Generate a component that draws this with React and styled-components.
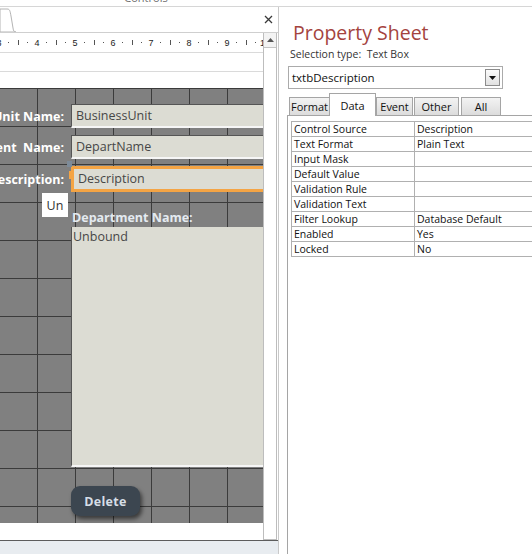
import React from 'react';
import styled, { createGlobalStyle } from 'styled-components';

const GlobalStyle = createGlobalStyle`
  html, body {
    margin: 0;
    padding: 0;
    background: #fff;
  }
  body {
    font-family: "Open Sans", "Noto Sans", sans-serif;
    overflow: hidden;
  }
`;

const Page = styled.div`
  width: 532px;
  height: 554px;
  display: flex;
  flex-direction: column;
  overflow: hidden;
  background: #fff;
`;

const TitleStrip = styled.div`
  height: 6px;
  flex-shrink: 0;
  border-bottom: 1px solid #d6d6d6;
  overflow: hidden;
`;

const TitleText = styled.div`
  width: 292px;
  text-align: center;
  font-size: 11px;
  line-height: 12px;
  margin-top: -8px;
  color: #6e6e6e;
`;

const Main = styled.div`
  flex: 1;
  display: flex;
  min-height: 0;
`;

/* ---------- left: form design window ---------- */

const DocWindow = styled.div`
  width: 278px;
  flex-shrink: 0;
  border-right: 1px solid #c9c9c9;
  display: flex;
  flex-direction: column;
`;

const DocTabBar = styled.div`
  height: 25px;
  flex-shrink: 0;
  border-bottom: 1px solid #cfcfcf;
  display: flex;
  justify-content: space-between;
  align-items: flex-end;
`;

const CloseButton = styled.div`
  width: 20px;
  height: 25px;
  display: flex;
  align-items: center;
  justify-content: center;
`;

const DocBody = styled.div`
  flex: 1;
  display: flex;
  min-height: 0;
`;

const Canvas = styled.div`
  width: 263px;
  flex-shrink: 0;
  display: flex;
  flex-direction: column;
  overflow: hidden;
`;

const Ruler = styled.div`
  height: 19px;
  flex-shrink: 0;
  margin-left: -5.75px;
  border-bottom: 1px solid #dadada;
  display: flex;
  font-family: "Liberation Sans", Arial, sans-serif;
  font-size: 9px;
  color: #222;
`;

const RulerCell = styled.div`
  width: 9.5px;
  flex-shrink: 0;
  display: flex;
  justify-content: center;
  align-items: center;
`;

const RulerDot = styled.span`
  width: 1.5px;
  height: 1.5px;
  background: #555;
`;

const RulerTick = styled.span`
  width: 1px;
  height: 5px;
  background: #555;
`;

const HeaderBand = styled.div`
  height: ${(p) => p.$h}px;
  flex-shrink: 0;
  border-bottom: ${(p) => (p.$line ? '1px solid #dadada' : 'none')};
`;

const DesignGrid = styled.div`
  height: 435px;
  flex-shrink: 0;
  position: relative;
  padding-top: 16px;
  box-sizing: border-box;
  background-color: #808080;
  background-image: linear-gradient(to right, #3b3b3b 1px, transparent 1px),
    linear-gradient(to bottom, #3b3b3b 1px, transparent 1px);
  background-size: 38px 38px;
  background-position: -1px 0;
`;

const FieldRow = styled.div`
  display: flex;
  align-items: center;
  gap: 7px;
  margin-bottom: ${(p) => (p.$last ? 0 : 7)}px;
`;

const FieldLabel = styled.div`
  width: 64px;
  flex-shrink: 0;
  display: flex;
  justify-content: flex-end;
  white-space: nowrap;
  font-weight: 700;
  font-size: 12.5px;
  color: #fff;
`;

const TextBox = styled.div`
  position: relative;
  width: 200px;
  flex-shrink: 0;
  height: ${(p) => (p.$selected ? 26 : 24)}px;
  box-sizing: border-box;
  display: flex;
  align-items: center;
  background: #dcdcd3;
  color: #474747;
  font-size: 12.5px;
  padding-left: 4px;
  padding-bottom: ${(p) => (p.$selected ? 2 : 0)}px;
  border-top: ${(p) => (p.$selected ? '3px solid #f4a444' : '1px solid #555')};
  border-left: ${(p) => (p.$selected ? '3px solid #f4a444' : '1px solid #555')};
  border-bottom: ${(p) => (p.$selected ? '3px solid #f4a444' : '2px solid #f6f6f6')};
  border-right: ${(p) => (p.$selected ? '3px solid #f4a444' : 'none')};
`;

const MoveHandle = styled.span`
  position: absolute;
  left: -7px;
  top: -8px;
  width: 5px;
  height: 6px;
  background: #7d8b99;
`;

const SizeHandle = styled.span`
  position: absolute;
  left: -5px;
  top: ${(p) => p.$top}px;
  width: 3px;
  height: ${(p) => p.$h}px;
  background: #f4a444;
`;

const DragHint = styled.div`
  position: absolute;
  left: 42px;
  top: 105px;
  width: 26px;
  height: 24px;
  background: #fff;
  color: #333;
  font-size: 12.5px;
  display: flex;
  align-items: center;
  justify-content: center;
`;

const DetailBlock = styled.div`
  margin-left: 71px;
  display: flex;
  flex-direction: column;
  align-items: flex-start;
`;

const DetailLabel = styled.div`
  margin-top: 17px;
  height: 18px;
  line-height: 18px;
  font-weight: 700;
  font-size: 12.5px;
  color: #e4eaf0;
  padding-left: 1px;
`;

const ListArea = styled.div`
  width: 200px;
  height: 240px;
  box-sizing: border-box;
  background: #dcdcd3;
  border-left: 1px solid #555;
  border-bottom: 2px solid #f6f6f6;
  color: #474747;
  font-size: 12.5px;
  line-height: 20px;
  padding-left: 1px;
`;

const DeleteButton = styled.div`
  margin-top: 19px;
  width: 69px;
  height: 30px;
  border-radius: 9px;
  background: #3c4650;
  box-shadow: 2px 3px 4px rgba(0, 0, 0, 0.55);
  display: flex;
  align-items: center;
  justify-content: center;
  font-weight: 700;
  font-size: 12.5px;
  color: #d6dee6;
  letter-spacing: 0.3px;
`;

const Scrollbar = styled.div`
  width: 14px;
  flex-shrink: 0;
  box-sizing: border-box;
  border: 1px solid #bdbdbd;
  border-top: none;
  background: #fff;
`;

const ScrollArrow = styled.div`
  height: 14px;
  border-bottom: 1px solid #c4c4c4;
  background: #f3f3f3;
  display: flex;
  align-items: center;
  justify-content: center;
`;

const BottomBar = styled.div`
  height: 13px;
  flex-shrink: 0;
  border-top: 1px solid #5c5c5c;
  background: #e8ecf0;
`;

/* ---------- right: property sheet ---------- */

const SheetPane = styled.div`
  flex: 1;
  min-width: 0;
  display: flex;
  flex-direction: column;
  padding: 12px 0 0 8px;
  overflow: hidden;
`;

const SheetTitle = styled.div`
  margin-left: 6px;
  font-size: 19.5px;
  line-height: 27px;
  color: #a4433e;
`;

const SelectionType = styled.div`
  margin: 1px 0 0 3px;
  font-size: 10.5px;
  line-height: 14px;
  color: #333;
  white-space: pre;
`;

const Combo = styled.div`
  margin: 5px 0 0 1px;
  width: 215px;
  height: 23px;
  box-sizing: border-box;
  border: 1px solid #ababab;
  display: flex;
  align-items: center;
  justify-content: space-between;
  padding: 0 2px 0 3px;
  font-size: 11.5px;
  color: #111;
`;

const ComboButton = styled.div`
  width: 15px;
  height: 17px;
  box-sizing: border-box;
  border: 1px solid #8c8c8c;
  background: linear-gradient(#fbfbfb, #e1e1e1);
  display: flex;
  align-items: center;
  justify-content: center;
`;

const TabRow = styled.div`
  margin: 4px 0 0 2px;
  height: 22px;
  display: flex;
  align-items: flex-end;
  position: relative;
  z-index: 1;
`;

const Tab = styled.div`
  width: ${(p) => p.$w}px;
  height: ${(p) => (p.$active ? 23 : 18)}px;
  margin-right: ${(p) => p.$gap}px;
  margin-bottom: ${(p) => (p.$active ? -1 : 0)}px;
  box-sizing: border-box;
  border: 1px solid #a5a5a5;
  border-bottom: none;
  background: ${(p) => (p.$active ? '#fff' : 'linear-gradient(#f3f3f3, #dcdcdc)')};
  display: flex;
  align-items: center;
  justify-content: center;
  font-size: 11px;
  color: #111;
`;

const SheetPanel = styled.div`
  flex: 1;
  border-top: 1px solid #a5a5a5;
  border-left: 1px solid #a5a5a5;
  padding: 5px 0 0 3px;
  overflow: hidden;
`;

const PropTable = styled.table`
  border-collapse: collapse;
  width: 260px;
  table-layout: fixed;
  font-size: 10.5px;
  color: #111;
`;

const PropCell = styled.td`
  height: 14px;
  padding: 0 0 0 2px;
  border: 1px solid #b0b0b0;
  line-height: 14px;
  white-space: nowrap;
  overflow: hidden;
  width: ${(p) => (p.$name ? '120px' : 'auto')};
`;

const rulerNumbers = [3, 4, 5, 6, 7, 8, 9, 10];

const properties = [
  ['Control Source', 'Description'],
  ['Text Format', 'Plain Text'],
  ['Input Mask', ''],
  ['Default Value', ''],
  ['Validation Rule', ''],
  ['Validation Text', ''],
  ['Filter Lookup', 'Database Default'],
  ['Enabled', 'Yes'],
  ['Locked', 'No'],
];

const tabs = [
  { label: 'Format', w: 41, gap: -1 },
  { label: 'Data', w: 47, gap: 0, active: true },
  { label: 'Event', w: 37, gap: 1 },
  { label: 'Other', w: 45, gap: 2 },
  { label: 'All', w: 40, gap: 0 },
];

const App = () => {
  return (
    <Page>
      <GlobalStyle />
      <TitleStrip>
        <TitleText>Controls</TitleText>
      </TitleStrip>
      <Main>
        <DocWindow>
          <DocTabBar>
            <svg width="16" height="24" viewBox="0 0 16 24">
              <path d="M0 1 H7 C10 1 10 3 11 8 L13 20 C13.5 23 14 24 16 24 H0 Z" fill="#fff" stroke="#b4b4b4" />
            </svg>
            <CloseButton>
              <svg width="9" height="9" viewBox="0 0 9 9">
                <path d="M1 1 L8 8 M8 1 L1 8" stroke="#3a3a3a" strokeWidth="1.3" />
              </svg>
            </CloseButton>
          </DocTabBar>
          <DocBody>
            <Canvas>
              <Ruler>
                {rulerNumbers.map((n) => (
                  <React.Fragment key={n}>
                    <RulerCell>{n}</RulerCell>
                    <RulerCell><RulerDot /></RulerCell>
                    <RulerCell><RulerTick /></RulerCell>
                    <RulerCell><RulerDot /></RulerCell>
                  </React.Fragment>
                ))}
              </Ruler>
              <HeaderBand $h={18} $line />
              <HeaderBand $h={16} />
              <DesignGrid>
                <FieldRow>
                  <FieldLabel>Business Unit Name:</FieldLabel>
                  <TextBox>BusinessUnit</TextBox>
                </FieldRow>
                <FieldRow>
                  <FieldLabel>Department&nbsp; Name:</FieldLabel>
                  <TextBox>DepartName</TextBox>
                </FieldRow>
                <FieldRow $last>
                  <FieldLabel>Description:</FieldLabel>
                  <TextBox $selected>
                    <MoveHandle />
                    <SizeHandle $top={2} $h={8} />
                    Description
                  </TextBox>
                </FieldRow>
                <DetailBlock>
                  <DetailLabel>Department Name:</DetailLabel>
                  <ListArea>Unbound</ListArea>
                  <DeleteButton>Delete</DeleteButton>
                </DetailBlock>
                <DragHint>Un</DragHint>
              </DesignGrid>
              <HeaderBand $h={17} />
            </Canvas>
            <Scrollbar>
              <ScrollArrow>
                <svg width="7" height="4" viewBox="0 0 7 4">
                  <path d="M0 4 L3.5 0 L7 4 Z" fill="#555" />
                </svg>
              </ScrollArrow>
            </Scrollbar>
          </DocBody>
          <BottomBar />
        </DocWindow>
        <SheetPane>
          <SheetTitle>Property Sheet</SheetTitle>
          <SelectionType>Selection type:  Text Box</SelectionType>
          <Combo>
            txtbDescription
            <ComboButton>
              <svg width="7" height="4" viewBox="0 0 7 4">
                <path d="M0 0 L7 0 L3.5 4 Z" fill="#111" />
              </svg>
            </ComboButton>
          </Combo>
          <TabRow>
            {tabs.map((t) => (
              <Tab key={t.label} $w={t.w} $gap={t.gap} $active={t.active}>
                {t.label}
              </Tab>
            ))}
          </TabRow>
          <SheetPanel>
            <PropTable>
              <tbody>
                {properties.map(([name, value]) => (
                  <tr key={name}>
                    <PropCell $name>{name}</PropCell>
                    <PropCell>{value}</PropCell>
                  </tr>
                ))}
              </tbody>
            </PropTable>
          </SheetPanel>
        </SheetPane>
      </Main>
    </Page>
  );
};

export default App;
